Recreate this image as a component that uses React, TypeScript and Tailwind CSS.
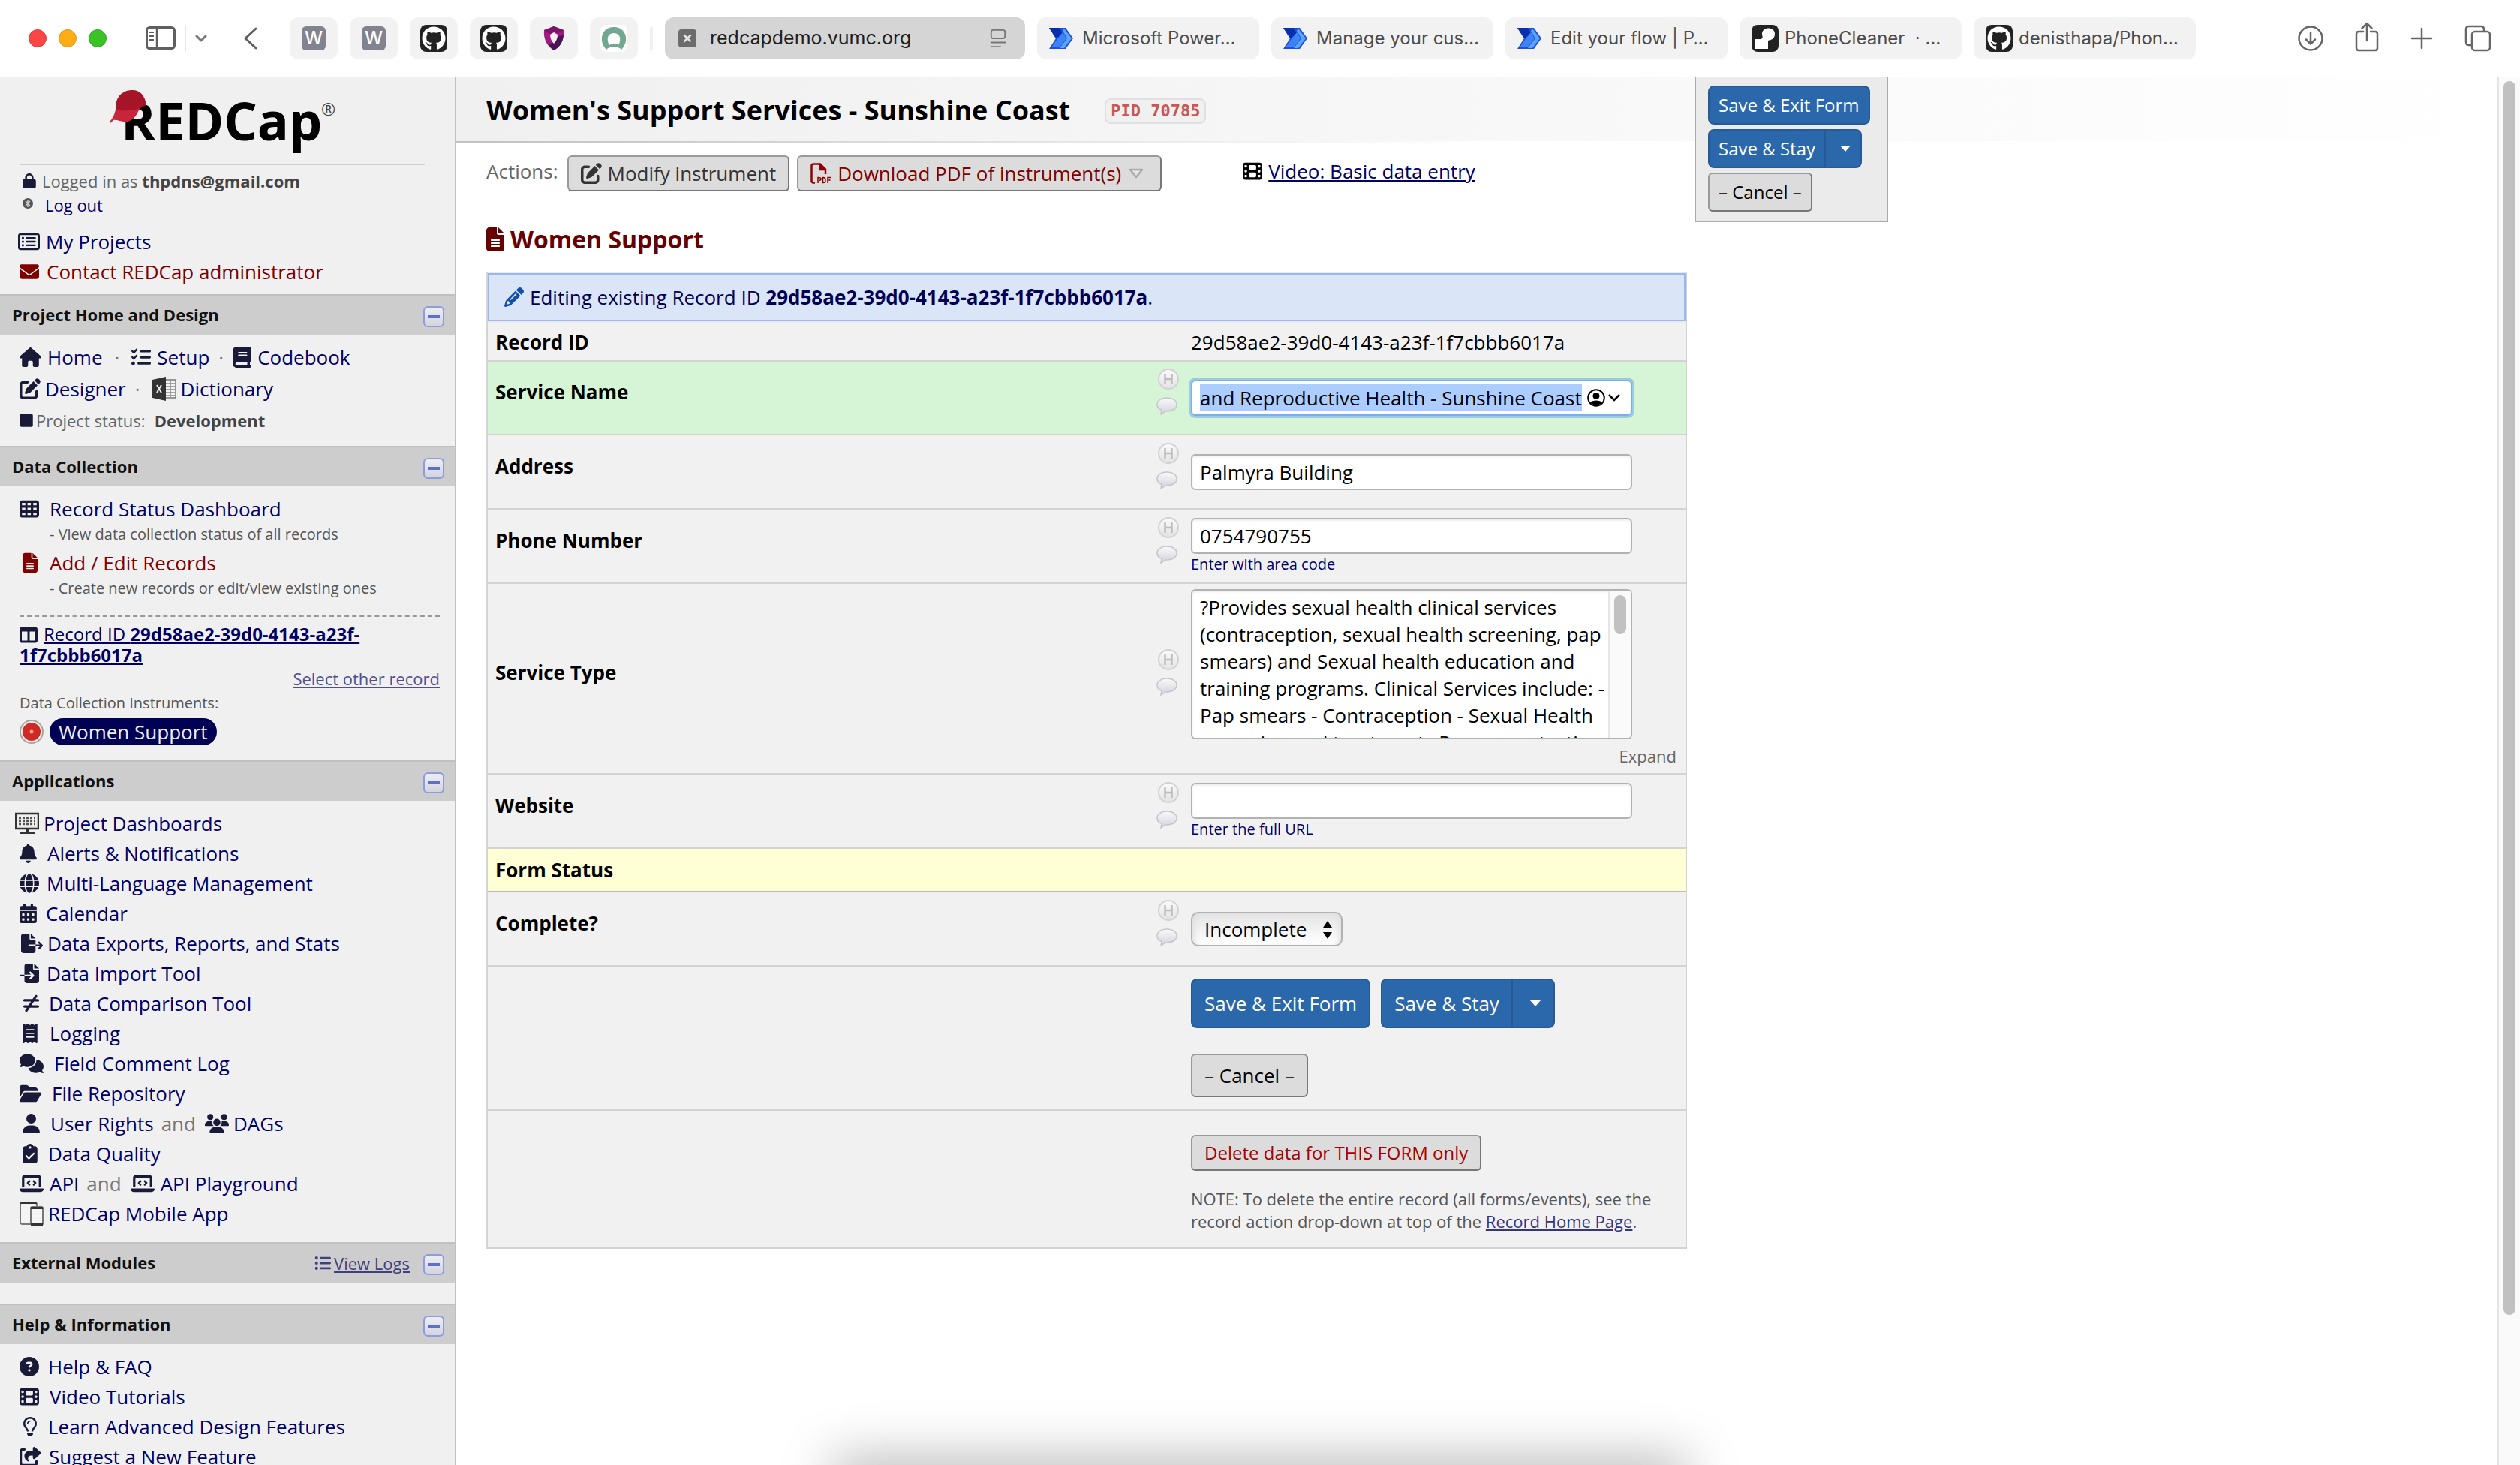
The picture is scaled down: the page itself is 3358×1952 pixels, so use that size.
import { useEffect, useRef, type ComponentType, type ReactNode } from "react";
import {
  FaBell,
  FaBook,
  FaCalendarDays,
  FaCircleQuestion,
  FaClipboardCheck,
  FaComments,
  FaEnvelope,
  FaFileExport,
  FaFileImport,
  FaFileLines,
  FaFilm,
  FaFolderOpen,
  FaGithub,
  FaGlobe,
  FaHouse,
  FaLaptopCode,
  FaListCheck,
  FaListUl,
  FaLock,
  FaNotEqual,
  FaPencil,
  FaPenToSquare,
  FaReceipt,
  FaRegLightbulb,
  FaRegRectangleList,
  FaShareFromSquare,
  FaSquare,
  FaTableCells,
  FaTableColumns,
  FaUser,
  FaUsers,
} from "react-icons/fa6";

type IconType = ComponentType<{ className?: string }>;

/* ---------- browser toolbar ---------- */

function WordIcon() {
  return (
    <span className="flex size-8 items-center justify-center rounded-md bg-[#82838f] font-['Inter'] text-2xl font-medium text-white">
      W
    </span>
  );
}

function GithubIcon() {
  return (
    <span className="flex size-9 items-center justify-center rounded-lg bg-[#222]">
      <FaGithub className="size-8 text-white" />
    </span>
  );
}

function ShieldIcon() {
  return (
    <svg className="h-8 w-7" viewBox="0 0 28 32" aria-hidden="true">
      <path d="M14 0 L27 5 C28 16 24 26 14 32 C4 26 0 16 1 5 Z" fill="#a0197d" />
      <path d="M14 0 L27 5 L20 9 L14 8 L8 10 L1 5 Z" fill="#7b1467" />
      <path d="M27 12 C26 21 22 28 14 32 C11 30 9 27 7 24 L14 21 L20 13 Z" fill="#4a1556" />
      <path d="M14 8 L19 11 C19 16 17 20 14 23 C11 20 9 16 9 11 Z" fill="#f4f0f4" />
    </svg>
  );
}

function RingIcon() {
  return (
    <span className="flex size-9 items-center justify-center rounded-lg bg-white">
      <svg className="size-8" viewBox="0 0 32 32" aria-hidden="true">
        <path
          d="M6 31 C-5 20 -1 1 16 1 C33 1 37 20 26 31 C22 26 10 26 6 31 Z M16 9 C7 9 6 18 10 25 C14 22 18 22 22 25 C26 18 25 9 16 9 Z"
          fill="#72a890"
          fillRule="evenodd"
        />
      </svg>
    </span>
  );
}

function PowerIcon() {
  return (
    <svg className="mr-1 h-7 w-8 shrink-0" viewBox="0 0 32 28" aria-hidden="true">
      <path d="M0 0 H22 L32 14 L22 28 H0 L9 14 Z" fill="#1d4fe0" />
      <path d="M0 0 H14 L18 8 L9 14 Z" fill="#0a2fae" />
      <path d="M20 1 L30 14 L20 27 H14 L24 14 L18 4 Z" fill="#5aa5fb" />
      <path d="M18 6 L23 14 L14 26 H3 L10 16 Z" fill="#3d83f6" />
    </svg>
  );
}

function PhoneIcon() {
  return (
    <span className="flex size-9 shrink-0 items-center justify-center rounded-lg bg-[#222]">
      <svg className="size-7" viewBox="0 0 28 28" aria-hidden="true">
        <path d="M10 8 C10 -2 27 -2 27 8 C27 15 22 16 18 17 V28 H1 V15 H9 C12 13 10 11 10 8 Z" fill="#fff" />
      </svg>
    </span>
  );
}

const pinned = [
  { name: "Docs one", icon: <WordIcon /> },
  { name: "Docs two", icon: <WordIcon /> },
  { name: "GitHub one", icon: <GithubIcon /> },
  { name: "GitHub two", icon: <GithubIcon /> },
  { name: "Shield", icon: <ShieldIcon /> },
  { name: "Ring", icon: <RingIcon /> },
];

const tabs = [
  { label: "Microsoft Power…", icon: <PowerIcon /> },
  { label: "Manage your cus…", icon: <PowerIcon /> },
  { label: "Edit your flow | P…", icon: <PowerIcon /> },
  { label: "PhoneCleaner  · …", icon: <PhoneIcon /> },
  { label: "denisthapa/Phon…", icon: <GithubIcon /> },
];

function Toolbar() {
  return (
    <header className="flex h-[102px] shrink-0 items-center bg-white px-[38px] font-['Inter',sans-serif] text-2xl text-[#4c4c4c]">
      <div className="flex gap-4">
        <span className="size-6 rounded-full border border-[#d93a36] bg-[#fb4646]" />
        <span className="size-6 rounded-full border border-[#d9931a] bg-[#fdae17]" />
        <span className="size-6 rounded-full border border-[#2ea321] bg-[#39c326]" />
      </div>
      <button aria-label="Sidebar" className="ml-[52px]">
        <svg className="h-8 w-10" viewBox="0 0 40 32" fill="none" stroke="#5f5f5f" aria-hidden="true">
          <rect x="1.5" y="1.5" width="37" height="28" rx="4" strokeWidth="3" />
          <path d="M15 1 V30" strokeWidth="2.5" />
          <path d="M5 8 H11 M5 13 H11 M5 18 H11" strokeWidth="2" />
        </svg>
      </button>
      <span className="ml-3 h-9 w-0.5 bg-[#e8e8e8]" />
      <button aria-label="Tab groups" className="ml-3">
        <svg className="h-3 w-4" viewBox="0 0 16 12" fill="none" stroke="#77777a" strokeWidth="3" strokeLinecap="round" strokeLinejoin="round" aria-hidden="true">
          <path d="M2 3 L8 9 L14 3" />
        </svg>
      </button>
      <button aria-label="Back" className="ml-12">
        <svg className="h-8 w-5" viewBox="0 0 20 32" fill="none" stroke="#5f5f5f" strokeWidth="3" strokeLinecap="round" strokeLinejoin="round" aria-hidden="true">
          <path d="M17 3 L3 16 L17 29" />
        </svg>
      </button>
      <nav className="ml-[42px] flex items-center gap-4" aria-label="Tabs">
        {pinned.map((p) => (
          <button key={p.name} aria-label={p.name} className="flex h-14 w-16 items-center justify-center rounded-xl bg-[#f2f2f2]">
            {p.icon}
          </button>
        ))}
        <span className="h-8 w-1 rounded bg-[#f0f0f0]" />
        <button className="flex h-14 w-[480px] items-center rounded-xl bg-[#d5d5d5] px-[18px] text-[25px] text-[#1f1f1f]">
          <svg className="size-6" viewBox="0 0 24 24" aria-hidden="true">
            <rect width="24" height="24" rx="4" fill="#6c6c6c" />
            <path d="M7.500 7.500 L16.500 16.500 M16.500 7.500 L7.500 16.500" stroke="#e4e4e4" strokeWidth="2.500" />
          </svg>
          <span className="ml-[18px] flex-1 text-left">redcapdemo.vumc.org</span>
          <svg className="mr-1.5 size-6" viewBox="0 0 24 26" fill="none" stroke="#777" strokeWidth="2" aria-hidden="true">
            <rect x="2" y="1" width="20" height="12" rx="3" />
            <path d="M1 19 H23 M1 25 H16" />
          </svg>
        </button>
        {tabs.map((t) => (
          <button key={t.label} className="flex h-14 w-[296px] items-center gap-2 overflow-hidden rounded-xl bg-[#f2f2f2] px-4 whitespace-pre">
            {t.icon}
            {t.label}
          </button>
        ))}
      </nav>
      <div className="ml-auto flex items-center gap-[41px]">
        <button aria-label="Downloads">
          <svg className="size-9" viewBox="0 0 36 36" fill="none" stroke="#666" strokeWidth="2.500" strokeLinecap="round" strokeLinejoin="round" aria-hidden="true">
            <circle cx="18" cy="18" r="15.500" />
            <path d="M18 10 V25 M12 19.500 L18 25.500 L24 19.500" />
          </svg>
        </button>
        <button aria-label="Share" className="-mt-1">
          <svg className="h-10 w-8" viewBox="0 0 32 40" fill="none" stroke="#666" strokeWidth="2.500" strokeLinecap="round" strokeLinejoin="round" aria-hidden="true">
            <path d="M11 13 H5 Q2 13 2 16 V35 Q2 38 5 38 H27 Q30 38 30 35 V16 Q30 13 27 13 H21" />
            <path d="M16 25 V2 M9.500 8.500 L16 2 L22.500 8.500" />
          </svg>
        </button>
        <button aria-label="New tab">
          <svg className="size-8" viewBox="0 0 32 32" stroke="#666" strokeWidth="2.500" strokeLinecap="round" aria-hidden="true">
            <path d="M16 3 V29 M3 16 H29" />
          </svg>
        </button>
        <button aria-label="Show tabs">
          <svg className="size-9" viewBox="0 0 36 36" fill="none" stroke="#666" strokeWidth="2.500" aria-hidden="true">
            <rect x="10" y="9" width="24" height="25" rx="4" />
            <path d="M10 27 H6 Q2 27 2 23 V6 Q2 2 6 2 H22 Q26 2 26 6 V9" />
          </svg>
        </button>
      </div>
    </header>
  );
}

/* ---------- sidebar ---------- */

function Logo() {
  return (
    <svg className="h-[88px] w-[300px] overflow-visible" viewBox="0 0 300 88" role="img" aria-label="REDCap logo">
      <text x="15" y="67" fontFamily="Open Sans" fontWeight="700" fontSize="70" fill="#000">
        REDCap
      </text>
      <text x="282" y="34" fontFamily="Open Sans" fontSize="23" fill="#444">
        ®
      </text>
      <path d="M8 24 C8 8 18 0 30 0 C42 0 47 8 49 20 C44 22 40 24 38 28 L8 34 Z" fill="#a51427" />
      <path d="M8 26 C18 28 30 28 40 24 C36 34 32 40 24 42 C16 43 10 39 5 40 L1 44 L0 42 C4 38 6 34 8 26 Z" fill="#c8243a" />
    </svg>
  );
}

function Section({ title, extra, children }: { title: string; extra?: ReactNode; children?: ReactNode }) {
  return (
    <section>
      <div className="flex h-[54px] items-center border-t-2 border-[#c0c0c0] bg-[#cdcdcd] pr-3.5 pl-4">
        <h2 className="flex-1 pb-0.5 text-[22px] leading-8 font-bold text-[#111]">{title}</h2>
        {extra}
        <button
          aria-label={`Collapse ${title}`}
          className="mt-1 flex size-7 items-center justify-center rounded-md border-2 border-[#8d9cdc] bg-linear-to-b from-[#ededf2] to-[#d4d4e0]"
        >
          <span className="h-1 w-4 bg-[#5c70c8]" />
        </button>
      </div>
      {children}
    </section>
  );
}

/* Icon widths follow the drawing's own proportions at a height of 26px. */
const glyphWidth = {
  xs: "w-5",
  sm: "w-[23px]",
  md: "w-[26px]",
  lg: "w-[29px]",
  xl: "w-8",
};

function Glyph({ icon: Icon, w = "md" }: { icon: IconType; w?: keyof typeof glyphWidth }) {
  return <Icon className={`h-[26px] shrink-0 text-[#191938] ${glyphWidth[w]}`} />;
}

function ScreenIcon() {
  return (
    <svg className="h-8 w-8 shrink-0" viewBox="0 0 32 30" aria-hidden="true">
      <path d="M1 2 H31 V22 H1 Z" fill="#eee" stroke="#333" strokeWidth="2.500" />
      <path d="M5 8 H27 M5 12 H27 M5 16 H27" stroke="#555" strokeWidth="2.500" strokeDasharray="3 2" />
      <path d="M14 22 H18 V26 H26 V29 H6 V26 H14 Z" fill="#333" />
    </svg>
  );
}

function DevicesIcon() {
  return (
    <svg className="size-8 shrink-0" viewBox="0 0 32 32" aria-hidden="true">
      <rect x="1" y="1" width="22" height="29" rx="3" fill="#f4f4f4" stroke="#777" strokeWidth="2" />
      <path d="M1 3 Q1 0 4 0 H20 Q23 0 23 3 Z" fill="#333" />
      <rect x="15" y="7" width="16" height="24" rx="2" fill="#f4f4f4" stroke="#777" strokeWidth="2" />
      <path d="M15 7 H31 V10 H15 Z M15 28 H31 V32 H15 Z" fill="#333" />
    </svg>
  );
}

function ExcelIcon() {
  return (
    <svg className="size-8 shrink-0" viewBox="0 0 32 32" aria-hidden="true">
      <rect x="14" y="4" width="17" height="24" fill="#f4f4f4" stroke="#777" strokeWidth="1.500" />
      <path d="M18 9 H30 M18 13 H30 M18 17 H30 M18 21 H30 M18 25 H30 M24 5 V27" stroke="#888" strokeWidth="1.500" />
      <path d="M0 4 L18 0 V32 L0 28 Z" fill="#333" />
      <path d="M6 11 L12 21 M12 11 L6 21" stroke="#eee" strokeWidth="2" />
    </svg>
  );
}

const link = "text-[26px] leading-10 text-[#000066]";

type Part = { icon: ReactNode; label: string; box: string };

const apps: Part[][] = [
  [{ icon: <ScreenIcon />, label: "Project Dashboards", box: "-ml-1.5 gap-1.5" }],
  [{ icon: <Glyph icon={FaBell} w="sm" />, label: "Alerts & Notifications", box: "gap-3.5" }],
  [{ icon: <Glyph icon={FaGlobe} />, label: "Multi-Language Management", box: "gap-2.5" }],
  [{ icon: <Glyph icon={FaCalendarDays} w="sm" />, label: "Calendar", box: "gap-3" }],
  [{ icon: <Glyph icon={FaFileExport} w="lg" />, label: "Data Exports, Reports, and Stats", box: "pl-0.5 gap-1.5" }],
  [{ icon: <Glyph icon={FaFileImport} />, label: "Data Import Tool", box: "gap-2.5" }],
  [{ icon: <Glyph icon={FaNotEqual} w="sm" />, label: "Data Comparison Tool", box: "pl-1 gap-3" }],
  [{ icon: <Glyph icon={FaReceipt} w="xs" />, label: "Logging", box: "pl-1 gap-4" }],
  [{ icon: <Glyph icon={FaComments} w="xl" />, label: "Field Comment Log", box: "gap-3.5" }],
  [{ icon: <Glyph icon={FaFolderOpen} w="lg" />, label: "File Repository", box: "gap-3.5" }],
  [
    { icon: <Glyph icon={FaUser} w="sm" />, label: "User Rights", box: "pl-1 gap-3.5" },
    { icon: <Glyph icon={FaUsers} w="xl" />, label: "DAGs", box: "gap-1.5" },
  ],
  [{ icon: <Glyph icon={FaClipboardCheck} w="xs" />, label: "Data Quality", box: "pl-1 gap-3.5" }],
  [
    { icon: <Glyph icon={FaLaptopCode} w="xl" />, label: "API", box: "gap-2" },
    { icon: <Glyph icon={FaLaptopCode} w="xl" />, label: "API Playground", box: "gap-2" },
  ],
  [{ icon: <DevicesIcon />, label: "REDCap Mobile App", box: "gap-1.5" }],
];

const help: Part[][] = [
  [{ icon: <Glyph icon={FaCircleQuestion} />, label: "Help & FAQ", box: "gap-3" }],
  [{ icon: <Glyph icon={FaFilm} />, label: "Video Tutorials", box: "gap-3.5" }],
  [{ icon: <Glyph icon={FaRegLightbulb} w="xs" />, label: "Learn Advanced Design Features", box: "pl-1 gap-3.5" }],
  [{ icon: <Glyph icon={FaShareFromSquare} w="lg" />, label: "Suggest a New Feature", box: "gap-2.5" }],
];

function LinkRows({ rows }: { rows: Part[][] }) {
  return (
    <ul className="px-[26px] pt-2.5 pb-[18px]">
      {rows.map((parts) => (
        <li key={parts[0].label} className="flex h-10 items-center">
          {parts.map((p, i) => (
            <div key={p.label} className="flex items-center">
              {i > 0 && <span className="mr-3 ml-2.5 text-[26px] leading-10 text-[#777]">and</span>}
              <a href="#" className={`flex items-center ${p.box} ${link}`}>
                {p.icon}
                {p.label}
              </a>
            </div>
          ))}
        </li>
      ))}
    </ul>
  );
}

function Sidebar() {
  return (
    <aside className="w-[608px] shrink-0 overflow-hidden border-r-2 border-[#c0c0c0] bg-[#f0f0f0] text-[22px] leading-8 text-[#666]">
      <div className="px-[26px] pt-[18px] pb-2.5">
        <div className="mr-[14px] flex justify-center border-b-2 border-[#d0d0d0] pb-2.5">
          <Logo />
        </div>
        <div className="flex items-center gap-2 pt-[5px] pl-1">
          <FaLock className="h-5 w-[18px] text-[#191938]" />
          <span>
            Logged in as <b className="text-[#444]">thpdns@gmail.com</b>
          </span>
        </div>
        <div className="flex items-center gap-4 pl-1">
          <svg className="mb-1 size-3.5" viewBox="0 0 14 14" aria-hidden="true">
            <circle cx="7" cy="7" r="7" fill="#555" />
            <path d="M4 4 L10 10 M10 4 L4 10 M7 2 V12" stroke="#ccc" strokeWidth="1.500" />
          </svg>
          <a href="#" className="text-[#000066]">
            Log out
          </a>
        </div>
        <a href="#" className={`mt-[13px] -ml-0.5 flex items-center gap-2 ${link}`}>
          <Glyph icon={FaRegRectangleList} w="lg" />
          My Projects
        </a>
        <a href="#" className="flex items-center gap-2.5 text-[26px] leading-10 text-[#800000]">
          <FaEnvelope className="size-[26px]" />
          Contact REDCap administrator
        </a>
      </div>

      <Section title="Project Home and Design">
        <div className="px-[26px] pt-2.5 pb-[18px]">
          <div className="flex h-10 items-center text-[26px]">
            <a href="#" className={`flex items-center gap-2 ${link}`}>
              <Glyph icon={FaHouse} w="lg" />
              Home
            </a>
            <span className="mx-4 text-[#777]">·</span>
            <a href="#" className={`flex items-center gap-2 ${link}`}>
              <Glyph icon={FaListCheck} />
              Setup
            </a>
            <span className="mx-3 text-[#777]">·</span>
            <a href="#" className={`flex items-center gap-2 ${link}`}>
              <FaBook className="h-7 w-[25px] text-[#191938]" />
              Codebook
            </a>
          </div>
          <div className="mt-0.5 flex h-10 items-center text-[26px]">
            <a href="#" className={`flex items-center gap-1.5 ${link}`}>
              <FaPenToSquare className="size-7 text-[#191938]" />
              Designer
            </a>
            <span className="mr-4 ml-3 text-[#777]">·</span>
            <a href="#" className={`flex items-center gap-1.5 ${link}`}>
              <ExcelIcon />
              Dictionary
            </a>
          </div>
          <div className="mt-1.5 flex items-center gap-1">
            <FaSquare className="h-5 w-[18px] text-[#191938]" />
            <span>Project status:</span>
            <b className="ml-2 text-[#444]">Development</b>
          </div>
        </div>
      </Section>

      <Section title="Data Collection">
        <div className="pt-2.5 pr-5 pb-5 pl-[26px]">
          <a href="#" className={`flex items-center gap-3.5 ${link}`}>
            <Glyph icon={FaTableCells} />
            Record Status Dashboard
          </a>
          <p className="pl-10 text-xl leading-7 text-[#555]">- View data collection status of all records</p>
          <a href="#" className="mt-1 flex items-center gap-4 pl-1 text-[26px] leading-10 text-[#800000]">
            <FaFileLines className="h-7 w-5" />
            Add / Edit Records
          </a>
          <p className="pl-10 text-xl leading-7 text-[#555]">- Create new records or edit/view existing ones</p>
          <hr className="mt-[22px] border-t-2 border-dashed border-[#999]" />
          <div className="mt-[9px] text-2xl leading-7 text-[#000066]">
            <FaTableColumns className="-my-1 mr-2 inline size-6 -translate-y-0.5 text-[#191938]" />
            <a href="#" className="underline underline-offset-2">
              Record ID <b>29d58ae2-39d0-4143-a23f-1f7cbbb6017a</b>
            </a>
          </div>
          <div className="mt-px text-right">
            <a href="#" className="text-[#50508f] underline underline-offset-2">
              Select other record
            </a>
          </div>
          <p className="mt-[3px] text-xl leading-7 text-[#555]">Data Collection Instruments:</p>
          <div className="mt-1.5 flex items-center gap-2">
            <svg className="size-8" viewBox="0 0 32 32" aria-hidden="true">
              <circle cx="16" cy="16" r="15" fill="#eee" stroke="#aaa49c" strokeWidth="2" />
              <circle cx="16" cy="16" r="12" fill="#cf2a24" />
              <circle cx="16" cy="16" r="2.500" fill="#f3a59b" />
            </svg>
            <a href="#" className="rounded-full bg-[#000054] px-3 text-[26px] leading-9 text-[#eee]">
              Women Support
            </a>
          </div>
        </div>
      </Section>

      <Section title="Applications">
        <LinkRows rows={apps} />
      </Section>

      <Section
        title="External Modules"
        extra={
          <a href="#" className="mr-[18px] flex items-center gap-1 text-[#404080]">
            <FaListUl className="size-[22px]" />
            <span className="underline underline-offset-2">View Logs</span>
          </a>
        }
      >
        <div className="h-7" />
      </Section>

      <Section title="Help & Information">
        <LinkRows rows={help} />
      </Section>
    </aside>
  );
}

/* ---------- form ---------- */

const greyButton =
  "rounded-md border-2 border-t-[#999] border-r-[#777] border-b-[#777] border-l-[#999] bg-[#dcdcdc] whitespace-nowrap";
const blueButton = "border-2 border-[#255a96] bg-[#2b67ab] whitespace-nowrap text-white";
const textBox =
  "block h-12 w-[588px] rounded-md border-2 border-[#b2b2b2] bg-white px-2.5 text-[26px] leading-9 text-black shadow-[inset_0_2px_3px_#eee] outline-none";

function Caret() {
  return (
    <svg className="h-2 w-3.5" viewBox="0 0 14 8" fill="#fff" aria-hidden="true">
      <path d="M0 0 H14 L7 8 Z" />
    </svg>
  );
}

function FieldIcons() {
  return (
    <div className="flex w-[46px] shrink-0 flex-col gap-2.5 pb-4">
      <button type="button" aria-label="Field history">
        <svg className="ml-0.5 size-7" viewBox="0 0 28 28" aria-hidden="true">
          <defs>
            <linearGradient id="disc" x1="0" y1="0" x2="0" y2="1">
              <stop offset="0" stopColor="#fbfbfb" />
              <stop offset="1" stopColor="#e2e2e2" />
            </linearGradient>
          </defs>
          <circle cx="14" cy="14" r="13" fill="url(#disc)" stroke="#d2d2d2" strokeWidth="2" />
          <path d="M9.500 7 V21 M18.500 7 V21 M9.500 14 H18.500" stroke="#bdbdbd" strokeWidth="2.500" />
        </svg>
      </button>
      <button type="button" aria-label="Field comments">
        <svg className="h-6 w-7" viewBox="0 0 28 24" aria-hidden="true">
          <defs>
            <linearGradient id="balloon" x1="0" y1="0" x2="0" y2="1">
              <stop offset="0" stopColor="#fafafa" />
              <stop offset="1" stopColor="#d0d0dc" />
            </linearGradient>
          </defs>
          <path
            d="M14 1 C22 1 27 5 27 10 C27 15 22 19 14 19 L12 19 L6 23 L7 17.500 C3 16 1 13 1 10 C1 5 6 1 14 1 Z"
            fill="url(#balloon)"
            stroke="#c6c6ca"
            strokeWidth="1.500"
          />
        </svg>
      </button>
    </div>
  );
}

function Row({
  label,
  htmlFor,
  tone = "bg-[#f1f1f1]",
  size = "min-h-[99px]",
  icons = true,
  children,
}: {
  label?: string;
  htmlFor?: string;
  tone?: string;
  size?: string;
  icons?: boolean;
  children?: ReactNode;
}) {
  return (
    <div className={`flex items-center border-b-2 border-[#d3d3d3] ${size} ${tone}`}>
      <div className="flex-1 pl-2.5">
        {label && (
          <label htmlFor={htmlFor} className={icons ? "block pb-4 font-bold" : "block font-bold"}>
            {label}
          </label>
        )}
      </div>
      {icons && <FieldIcons />}
      <div className="w-[659px] shrink-0">{children}</div>
    </div>
  );
}

function SaveStay({ pad, height, caretBox }: { pad: string; height: string; caretBox: string }) {
  return (
    <div className="flex">
      <button type="button" className={`rounded-l-lg ${blueButton} ${pad} ${height}`}>
        Save &amp; Stay
      </button>
      <button
        type="button"
        aria-label="More save options"
        className={`-ml-0.5 flex items-center justify-center rounded-r-lg pl-1.5 ${blueButton} ${height} ${caretBox}`}
      >
        <Caret />
      </button>
    </div>
  );
}

function ServiceNameInput() {
  const ref = useRef<HTMLInputElement>(null);
  useEffect(() => {
    ref.current?.focus();
    ref.current?.select();
  }, []);
  return (
    <div className="relative w-[588px]">
      <input
        id="service-name"
        ref={ref}
        defaultValue="and Reproductive Health - Sunshine Coast"
        className="block h-12 w-full rounded-md border-2 border-[#77aefc] bg-white pr-[58px] pl-2.5 text-[26px] leading-9 text-black ring-3 ring-[#9ecbdc] outline-none selection:bg-[#accdff] selection:text-black"
      />
      <div className="absolute top-3 right-4 flex items-center gap-1">
        <svg className="size-6" viewBox="0 0 24 24" aria-hidden="true">
          <circle cx="12" cy="12" r="10.800" fill="#fff" stroke="#000" strokeWidth="2" />
          <circle cx="12" cy="9.500" r="4.500" />
          <path d="M4 18 C7 14.500 17 14.500 20 18 C16 23 8 23 4 18 Z" />
        </svg>
        <svg className="h-3 w-4" viewBox="0 0 16 12" fill="none" stroke="#000" strokeWidth="2.500" aria-hidden="true">
          <path d="M1 2 L8 9 L15 2" />
        </svg>
      </div>
    </div>
  );
}

function RecordForm() {
  return (
    <form className="w-full max-w-[1600px] border-x-2 border-[#d3d3d3] text-[26px] leading-9 text-black">
      <div className="border-y-2 border-[#ebebeb]">
        <div className="flex h-16 items-center gap-2 border-2 border-[#9ab6ee] bg-[#dae5f8] pl-5 text-[#000054]">
          <FaPencil className="size-[26px] text-[#1450a8]" />
          <span>
            Editing existing Record ID <b>29d58ae2-39d0-4143-a23f-1f7cbbb6017a</b>.
          </span>
        </div>
      </div>
      <Row label="Record ID" size="h-[52px] pt-0.5" icons={false}>
        29d58ae2-39d0-4143-a23f-1f7cbbb6017a
      </Row>
      <Row label="Service Name" htmlFor="service-name" tone="bg-[#d5f5d6]" size="min-h-[98px]">
        <ServiceNameInput />
      </Row>
      <Row label="Address" htmlFor="address">
        <input id="address" defaultValue="Palmyra Building" className={textBox} />
      </Row>
      <Row label="Phone Number" htmlFor="phone">
        <input id="phone" defaultValue="0754790755" className={textBox} />
        <p className="text-xl leading-7 text-[#000066]">Enter with area code</p>
      </Row>
      <Row label="Service Type" htmlFor="service-type" size="min-h-[254px]">
        <div className="relative w-[588px]">
          <textarea
            id="service-type"
            defaultValue="?Provides sexual health clinical services (contraception, sexual health screening, pap smears) and Sexual health education and training programs. Clinical Services include: - Pap smears - Contraception - Sexual Health screening and treatments Pregnancy testing"
            className="block h-50 w-full resize-none overflow-hidden rounded-md border-2 border-[#b2b2b2] bg-white py-1 pr-8 pl-2.5 shadow-[inset_0_2px_3px_#eee] outline-none"
          />
          <div className="absolute inset-y-0.5 right-0.5 w-[30px] rounded-r border-l-2 border-[#e6e6e6] bg-[#fafafa] pt-1.5 pl-1.5">
            <div className="h-[52px] w-4 rounded-full bg-[#c1c1c1]" />
          </div>
        </div>
        <div className="mt-1.5 pr-3 text-right">
          <a href="#" className="block text-[22px] leading-8 text-[#666]">
            Expand
          </a>
        </div>
      </Row>
      <Row label="Website" htmlFor="website">
        <input id="website" className={textBox} />
        <p className="text-xl leading-7 text-[#000066]">Enter the full URL</p>
      </Row>
      <div className="flex h-[58px] items-center border-b-2 border-[#bababa] bg-[#feffd5] pl-2.5 font-bold">Form Status</div>
      <Row label="Complete?" htmlFor="complete">
        <div className="relative w-[202px]">
          <select
            id="complete"
            className="block h-[46px] w-full appearance-none rounded-[10px] border-2 border-[#b2b2b2] bg-linear-to-b from-[#e4e4e4] to-white px-4 leading-9 shadow-[inset_8px_0_8px_-6px_#ddd,inset_-8px_0_8px_-6px_#ddd]"
          >
            <option>Incomplete</option>
            <option>Unverified</option>
            <option>Complete</option>
          </select>
          <svg className="pointer-events-none absolute top-3 right-3.5 h-6 w-3" viewBox="0 0 12 24" aria-hidden="true">
            <path d="M0 9 L6 0 L12 9 Z M0 15 L6 24 L12 15 Z" />
          </svg>
        </div>
      </Row>
      <Row size="h-[192px]" icons={false}>
        <div className="flex gap-3.5">
          <button type="button" className={`h-[66px] rounded-lg px-4 ${blueButton}`}>
            Save &amp; Exit Form
          </button>
          <SaveStay pad="px-4" height="h-[66px]" caretBox="w-[58px]" />
        </div>
        <button type="button" className={`mt-[34px] block h-[58px] px-4 ${greyButton}`}>
          – Cancel –
        </button>
      </Row>
      <Row size="h-[184px]" icons={false}>
        <button type="button" className={`mt-3 block h-12 px-4 text-2xl text-[#a80000] ${greyButton}`}>
          Delete data for THIS FORM only
        </button>
        <p className="mt-[22px] w-[640px] text-[22px] leading-[30px] text-[#555]">
          NOTE: To delete the entire record (all forms/events), see the record action drop-down at top of the{" "}
          <a href="#" className="text-[#35357f] underline underline-offset-2">
            Record Home Page
          </a>
          .
        </p>
      </Row>
    </form>
  );
}

export default function App() {
  return (
    <div className="relative flex h-screen flex-col overflow-hidden bg-white font-['Open_Sans',sans-serif]">
      <Toolbar />
      <div className="relative flex min-h-0 flex-1">
        <Sidebar />
        <main className="min-w-0 flex-1 overflow-hidden">
          <div className="bg-linear-to-r from-[#c0c0c0] to-white to-50% pb-0.5">
            <div className="flex h-[86px] items-center bg-linear-to-r from-[#f0f0f0] to-white pt-1 pl-10">
              <h1 className="text-4xl font-bold text-black">Women&apos;s Support Services - Sunshine Coast</h1>
              <span className="mt-0.5 ml-[46px] rounded-lg border-2 border-[#e0e0e0] bg-[#f0f0f0] px-1.5 font-['DejaVu_Sans_Mono',monospace] text-[22px] leading-[30px] font-bold text-[#c95555]">
                PID 70785
              </span>
            </div>
          </div>
          <div className="px-10">
            <div className="flex items-center pt-[17px] text-[26px] leading-9 text-[#666]">
              <span className="pb-1.5">Actions:</span>
              <button className={`ml-3 flex h-12 items-center gap-2 px-4 text-[#333] ${greyButton}`}>
                <FaPenToSquare className="size-7" />
                Modify instrument
              </button>
              <button className={`ml-2.5 flex h-12 items-center gap-2 px-4 text-[#800000] ${greyButton}`}>
                <svg className="size-7" viewBox="0 0 28 28" aria-hidden="true" fill="none" stroke="#900000" strokeWidth="2.500">
                  <path d="M6 26.500 H4 Q1.500 26.500 1.500 24 V4 Q1.500 1.500 4 1.500 H13 L20 8.500 V15" />
                  <path d="M13 2 V9 H20" fill="#900000" />
                  <path
                    d="M10 27 V19.500 H11 Q14 19.500 14 21.500 Q14 23.500 11 23.500 M16.500 19.500 H17 Q20 19.500 20 23 Q20 26.500 17 26.500 H16.500 Z M23 27 V19.500 H27 M23 23 H26.500"
                    strokeWidth="1.500"
                  />
                </svg>
                Download PDF of instrument(s)
                <svg
                  className="mr-1.5 ml-0.5 h-3.5 w-5"
                  viewBox="0 0 20 14"
                  fill="#e6e6e6"
                  stroke="#aaa"
                  strokeWidth="2.500"
                  strokeLinejoin="round"
                  aria-hidden="true"
                >
                  <path d="M2 2 H18 L10 12 Z" />
                </svg>
              </button>
              <a href="#" className="ml-[108px] flex items-center gap-2 pb-1.5 text-[#000066]">
                <FaFilm className="size-[26px] text-black" />
                <span className="underline underline-offset-2">Video: Basic data entry</span>
              </a>
            </div>
            <h2 className="mt-10 mb-[19px] flex items-center gap-2 text-[32px] leading-[48px] font-bold text-[#680000]">
              <FaFileLines className="h-8 w-6" />
              Women Support
            </h2>
            <RecordForm />
          </div>
        </main>
        <div className="w-[30px] shrink-0 border-l-2 border-[#e4e4e4] bg-[#fafafa] pt-1.5 pl-1.5">
          <div className="h-[1644px] w-4 rounded-full bg-[#c1c1c1]" />
        </div>
        <div className="absolute top-0 left-[2258px] flex h-[194px] w-[258px] flex-col items-start gap-1.5 border-2 border-t-0 border-[#aaa] bg-[#ebebeb] px-4 pt-3 text-2xl">
          <button className={`h-[52px] rounded-lg px-3 ${blueButton}`}>Save &amp; Exit Form</button>
          <SaveStay pad="px-3" height="h-[52px]" caretBox="w-[50px]" />
          <button className={`h-[52px] px-3 text-black ${greyButton}`}>– Cancel –</button>
        </div>
      </div>
      <div className="pointer-events-none absolute top-full left-1/3 h-12 w-1/3 shadow-[0_0_70px_10px_rgba(0,0,0,0.28)]" />
    </div>
  );
}
